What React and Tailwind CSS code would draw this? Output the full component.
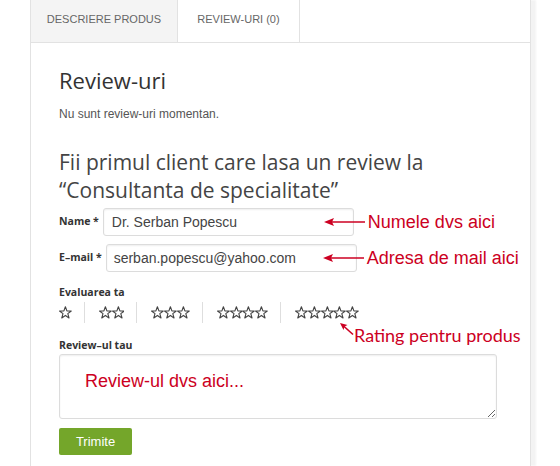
import React from "react";

const RED = "#cc0022";

function Star() {
  return (
    <svg width="12.8" height="12.8" viewBox="0 0 12 12" className="block">
      <path
        d="M6 0.7 L7.4 4.6 L11.5 4.7 L8.25 7.2 L9.4 11.2 L6 8.85 L2.6 11.2 L3.75 7.2 L0.5 4.7 L4.6 4.6 Z"
        fill="none"
        stroke="#444"
        strokeWidth="1.05"
        strokeLinejoin="round"
      />
    </svg>
  );
}

function LeftArrow() {
  return (
    <svg width="41" height="10" viewBox="0 0 41 10" className="block shrink-0">
      <line x1="4" y1="5" x2="41" y2="5" stroke={RED} strokeWidth="1.6" />
      <path d="M0 5 L10 1 L8 5 L10 9 Z" fill={RED} />
    </svg>
  );
}

export default function App() {
  const groups = [1, 2, 3, 4, 5];
  return (
    <div className="relative w-[560px] h-[466px] overflow-hidden bg-white" style={{ fontFamily: '"Liberation Sans", Arial, sans-serif' }}>
      <div className="relative ml-[30px] w-[501px] h-[466px] border-l border-r border-[#e2e2e2] shadow-[5px_0_2px_#f3f3f3]">
        {/* Tabs */}
        <div className="flex h-[43px] border-b border-[#e2e2e2]">
          <div className="w-[147px] flex items-center justify-center bg-[#f4f4f4] border-r border-[#e2e2e2] text-[11px] text-[#666] pb-[4px]">
            DESCRIERE PRODUS
          </div>
          <div className="w-[122px] flex items-center justify-center border-r border-[#e2e2e2] text-[11px] text-[#666] pb-[4px]">
            REVIEW-URI (0)
          </div>
        </div>

        <div className="pl-[28px] pt-[22px]">
          <h2 className="text-[22px] leading-[30px] text-[#333]" style={{ fontFamily: '"Open Sans", sans-serif' }}>
            Review-uri
          </h2>
          <p className="mt-[10px] text-[12px] leading-[18px] text-[#555]">Nu sunt review-uri momentan.</p>

          <h3 className="mt-[25px] text-[21px] leading-[28px] text-[#444]" style={{ fontFamily: '"Open Sans", sans-serif' }}>
            Fii primul client care lasa un review la
            <br />
            “Consultanta de specialitate”
          </h3>

          {/* Name */}
          <div className="mt-[4px] flex items-center">
            <span className="text-[10.5px] font-bold text-[#333] mr-[4px]" style={{ fontFamily: '"Open Sans", sans-serif' }}>
              Name *
            </span>
            <div className="w-[251px] h-[28px] flex items-center pl-[8px] border border-[#dcdcdc] rounded-[3px] shadow-[inset_0_1px_2px_#eee] text-[14px] text-[#444]">
              Dr. Serban Popescu
            </div>
            <div className="flex items-center ml-[-30px]">
              <LeftArrow />
              <span className="ml-[3px] text-[18px] leading-none" style={{ color: RED }}>Numele dvs aici</span>
            </div>
          </div>

          {/* Email */}
          <div className="mt-[8px] flex items-center">
            <span className="text-[10.5px] font-bold text-[#333] mr-[4px]" style={{ fontFamily: '"Open Sans", sans-serif' }}>
              E–mail *
            </span>
            <div className="w-[251px] h-[28px] flex items-center pl-[7px] border border-[#dcdcdc] rounded-[3px] shadow-[inset_0_1px_2px_#eee] text-[14px] text-[#444]">
              serban.popescu@yahoo.com
            </div>
            <div className="flex items-center ml-[-34px]">
              <LeftArrow />
              <span className="ml-[3px] text-[18px] leading-none" style={{ color: RED }}>Adresa de mail aici</span>
            </div>
          </div>

          {/* Rating */}
          <div className="mt-[13px] text-[10.5px] leading-[14px] font-bold text-[#333]" style={{ fontFamily: '"Open Sans", sans-serif' }}>
            Evaluarea ta
          </div>
          <div className="relative mt-[3px] flex items-center h-[21px]">
            {groups.map((n, i) => (
              <div
                key={n}
                className={
                  (i === 0 ? "" : "border-l border-[#dedede] pl-[14px] ") +
                  (i === groups.length - 1 ? "" : "pr-[12px] ") +
                  "flex items-center h-[21px]"
                }
              >
                {Array.from({ length: n }).map((_, k) => (
                  <Star key={k} />
                ))}
              </div>
            ))}
            <div className="absolute left-[281px] top-[21px] flex items-start">
              <svg width="14" height="13" viewBox="0 0 14 13" className="block shrink-0">
                <line x1="3" y1="2.5" x2="13" y2="11.5" stroke={RED} strokeWidth="1.6" />
                <path d="M0 0 L7.5 2 L4.5 3.5 L3.5 7 Z" fill={RED} />
              </svg>
              <span className="mt-[2px] text-[18px] leading-[20px] whitespace-nowrap" style={{ color: RED, fontFamily: 'Lato, "Open Sans", sans-serif' }}>
                Rating pentru produs
              </span>
            </div>
          </div>

          <div className="mt-[15px] text-[10.5px] leading-[14px] font-bold text-[#333]" style={{ fontFamily: '"Open Sans", sans-serif' }}>
            Review–ul tau
          </div>
          <textarea
            className="mt-[2px] block w-[438px] h-[65px] border border-[#dcdcdc] rounded-[3px] shadow-[inset_0_1px_2px_#eee] pl-[25px] pt-[15px] text-[18px] leading-[22px] outline-none"
            style={{ color: RED, fontFamily: '"Liberation Sans", Arial, sans-serif' }}
            defaultValue="Review-ul dvs aici..."
          />

          <button className="mt-[9px] w-[73px] h-[27px] rounded-[2px] bg-[#74a62a] text-white text-[13px] flex items-center justify-center">
            Trimite
          </button>
        </div>
      </div>
    </div>
  );
}
